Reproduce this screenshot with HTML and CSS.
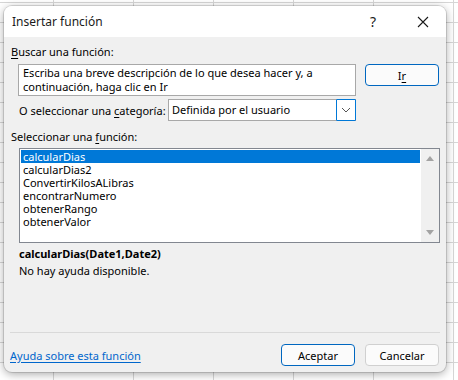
FILE: index.html
```html
<!DOCTYPE html>
<html lang="es">
<head>
    <meta charset="UTF-8">
    <meta name="viewport" content="width=device-width, initial-scale=1.0">
    <title>Insertar función</title>
    <link rel="stylesheet" href="styles.css">
</head>
<body>
    <div class="dialog">
        <div class="titlebar">
            <span class="title">Insertar función</span>
            <span class="help">?</span>
            <span class="close">
                <svg width="12" height="12" viewBox="0 0 12 12">
                    <path d="M1 1 L11 11 M11 1 L1 11" stroke="#1a1a1a" stroke-width="1.1" fill="none"/>
                </svg>
            </span>
        </div>

        <div class="content">
            <div class="label"><u>B</u>uscar una función:</div>
            <div class="search-row">
                <div class="search-box">Escriba una breve descripción de lo que desea hacer y, a continuación, haga clic en Ir</div>
                <button class="btn btn-default">I<u>r</u></button>
            </div>

            <div class="category-row">
                <span class="category-label">O seleccionar una <u>c</u>ategoría:</span>
                <div class="select">
                    <span class="select-text">Definida por el usuario</span>
                    <span class="select-arrow">
                        <svg width="10" height="6" viewBox="0 0 10 6">
                            <path d="M1 1 L5 5 L9 1" stroke="#555" stroke-width="1" fill="none"/>
                        </svg>
                    </span>
                </div>
            </div>

            <div class="label label-list">Seleccionar una <u>f</u>unción:</div>
            <div class="listbox">
                <ul class="items">
                    <li class="selected">calcularDias</li>
                    <li>calcularDias2</li>
                    <li>ConvertirKilosALibras</li>
                    <li>encontrarNumero</li>
                    <li>obtenerRango</li>
                    <li>obtenerValor</li>
                </ul>
                <div class="scrollbar">
                    <span class="arrow-up"></span>
                    <span class="arrow-down"></span>
                </div>
            </div>

            <div class="signature">calcularDias(Date1,Date2)</div>
            <div class="desc">No hay ayuda disponible.</div>
        </div>

        <div class="footer">
            <div class="separator"></div>
            <div class="footer-row">
                <a class="help-link" href="#">Ayuda sobre esta función</a>
                <div class="buttons">
                    <button class="btn btn-default">Aceptar</button>
                    <button class="btn">Cancelar</button>
                </div>
            </div>
        </div>
    </div>
</body>
</html>
```

FILE: styles.css
```css
html, body {
    margin: 0;
    height: 100%;
}
body {
    font-family: "Noto Sans", "Open Sans", Arial, sans-serif;
    font-size: 11px;
    color: #000;
    background-color: #ffffff;
    /* rejilla de la hoja de cálculo */
    background-image:
        linear-gradient(to right, #d6d6d6 1px, transparent 1px),
        linear-gradient(to bottom, #d6d6d6 1px, transparent 1px);
    background-size: 80px 20px;
    background-position: 53px 2px;
    padding: 6px 12px 0 4px;
    box-sizing: border-box;
    overflow: hidden;
}
u {
    text-decoration-thickness: 1px;
    text-underline-offset: 2px;
}
.dialog {
    width: 442px;
    height: 366px;
    background-color: #f0f0f0;
    border-radius: 8px;
    box-shadow: 0 2px 10px rgba(0, 0, 0, 0.35), 0 0 0 1px rgba(0, 0, 0, 0.12);
    display: flex;
    flex-direction: column;
    overflow: hidden;
}
.titlebar {
    height: 31px;
    background-color: #ffffff;
    display: flex;
    align-items: center;
    padding-left: 8px;
    flex-shrink: 0;
    font-size: 12px;
}
.title {
    flex: 1;
    color: #1a1a1a;
}
.help {
    width: 14px;
    text-align: center;
    font-size: 14px;
    margin-right: 37px;
    color: #1a1a1a;
}
.close {
    width: 12px;
    height: 12px;
    margin-right: 17px;
    display: flex;
}
.content {
    padding: 7px 6px 0 7px;
    flex: 1;
}
.label {
    line-height: 15px;
}
.search-row {
    display: flex;
    margin: 5px 0 0 7px;
    gap: 9px;
}
.search-box {
    width: 338px;
    height: 32px;
    box-sizing: border-box;
    border: 1px solid #a8a8a8;
    background-color: #ffffff;
    padding: 1px 4px;
    line-height: 14px;
}
.btn {
    font-family: inherit;
    font-size: 11px;
    width: 74px;
    height: 22px;
    box-sizing: border-box;
    border: 1px solid #d0d0d0;
    border-radius: 4px;
    background-color: #fbfbfb;
    color: #000;
    padding: 0;
}
.btn-default {
    border-color: #0067c0;
}
.category-row {
    display: flex;
    align-items: center;
    justify-content: space-between;
    width: 338px;
    margin: 3px 0 0 7px;
    padding-left: 1px;
    box-sizing: border-box;
}
.category-label {
    white-space: nowrap;
}
.select {
    width: 188px;
    height: 22px;
    box-sizing: border-box;
    border: 1px solid #a8a8a8;
    background-color: #ffffff;
    display: flex;
}
.select-text {
    flex: 1;
    padding-left: 3px;
    line-height: 20px;
}
.select-arrow {
    width: 18px;
    margin: -1px -1px -1px 0;
    border: 1px solid #0078d7;
    border-radius: 1px;
    display: flex;
    align-items: center;
    justify-content: center;
}
.label-list {
    margin-top: 8px;
}
.listbox {
    width: 421px;
    height: 95px;
    box-sizing: border-box;
    margin: 4px 0 0 8px;
    border: 1px solid #828790;
    background-color: #ffffff;
    display: flex;
}
.items {
    list-style: none;
    margin: 0;
    padding: 1px;
    flex: 1;
}
.items li {
    height: 13px;
    line-height: 13px;
    padding-left: 2px;
}
.items li.selected {
    background-color: #0078d7;
    color: #ffffff;
}
.scrollbar {
    width: 18px;
    background-color: #f0f0f0;
    display: flex;
    flex-direction: column;
    justify-content: space-between;
    align-items: center;
    padding: 7px 0 7px;
}
.arrow-up, .arrow-down {
    width: 0;
    height: 0;
    border-left: 4px solid transparent;
    border-right: 4px solid transparent;
}
.arrow-up {
    border-bottom: 5px solid #a3a3a3;
}
.arrow-down {
    border-top: 5px solid #a3a3a3;
}
.signature {
    font-weight: bold;
    line-height: 17px;
    margin: 2px 0 0 8px;
}
.desc {
    line-height: 17px;
    margin-left: 8px;
}
.footer {
    flex-shrink: 0;
}
.separator {
    height: 1px;
    background-color: #d9d9d9;
    margin: 0 6px;
}
.footer-row {
    display: flex;
    align-items: center;
    justify-content: space-between;
    padding: 11px 7px 6px 6px;
}
.help-link {
    color: #0066cc;
    text-decoration: underline;
    text-underline-offset: 2px;
}
.buttons {
    display: flex;
    gap: 10px;
}
```
